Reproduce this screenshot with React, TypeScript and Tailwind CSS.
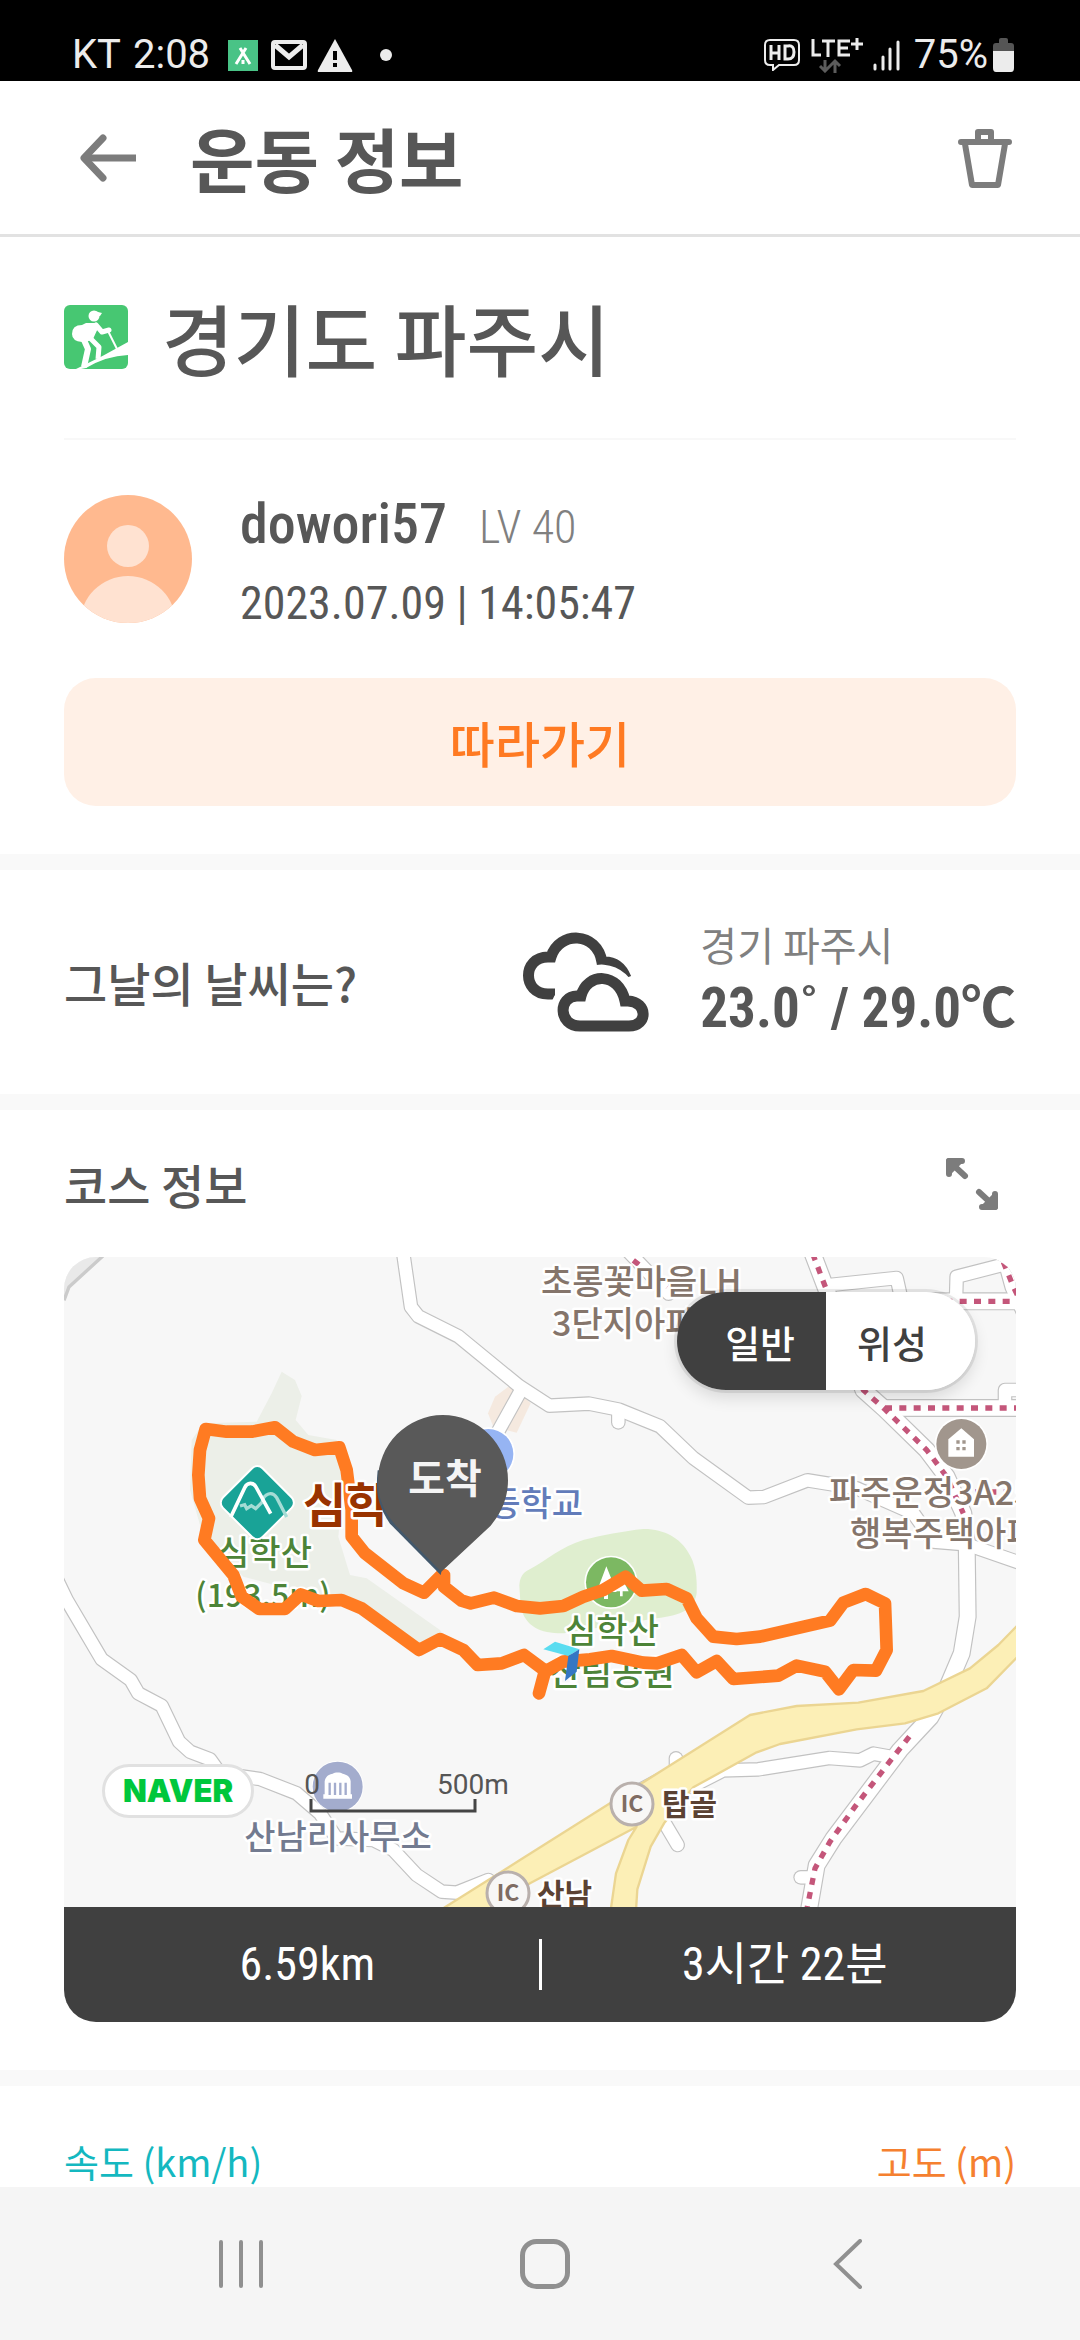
import type { ReactNode } from "react";

const LATIN = "font-['Roboto_Condensed','Noto_Sans_CJK_KR',sans-serif]";

// Map geometry is drawn on a 2856x1950 grid, three units to one label unit.
const ROADS = [
  "M1015 -30 1041 150 1063 178 1183 238 1365 387 1456 446 1575 440 1665 458 1788 508 1888 603 2053 722 2100 720 2230 670 2378 694 2548 769 2608 854 2708 862 2870 918",
  "M1663 462V496",
  "M1368 405 1296 535",
  "M-30 950 8 1029 113 1207 200 1269 223 1309 293 1346 345 1454 378 1484 438 1507 468 1549 588 1566 698 1609 768 1669 818 1744 928 1749 988 1779 1058 1854 1133 1904 1178 1907 1273 1869",
  "M2478 1499 2428 1490 2388 1510 2296 1503 2083 1537 1978 1540 1880 1590",
  "M2210 1861H2250",
  "M1836 1504V1560",
  "M1790 1678 1841 1764",
  "M1718 1605 1820 1550",
  "M1680 -30 1814 110",
  "M2298 84 2498 63 2513 130",
  "M2676 130 2678 59 2830 20",
  "M2823 453V399H2890",
];

const WIDE_ROADS = [
  "M2708 850 2711 1079 2693 1189 2650 1290 2600 1380 2558 1425 2508 1479 2308 1745 2258 1825 2233 1970",
  "M2242 -21 2290 105 2398 399 2463 457 2588 579 2648 659 2698 769 2708 862",
  "M2290 133H2880",
  "M2463 453H2880",
  "M2818 -20 2848 89 2880 160",
];

const BORDERS = [
  "M2536 1439 2473 1519 2373 1649 2298 1754 2253 1834 2228 1960",
  "M2246 -10 2290 105 2398 399 2463 457 2588 579 2648 659 2698 769",
  "M2300 133H2870",
  "M2463 453H2870",
  "M2818 15 2848 89 2870 134",
  "M1708 10 1810 90",
  "M2690 705H2870",
];

const ROUTE =
  "M1140 954V989L1193 1031 1220 1039 1290 1022 1358 1047 1428 1054 1498 1047 1558 1019 1618 999 1685 959 1733 1001 1808 996 1868 1024 1898 1084 1948 1139 2018 1146 2088 1139 2298 1091 2338 1037 2405 1011 2463 1039 2466 1119 2468 1179 2436 1241 2368 1239 2325 1297 2283 1244 2198 1226 2143 1256 2008 1266 1958 1212 1898 1246 1853 1194 1780 1219 1738 1217 1643 1197 1578 1207 1498 1214 1443 1244 1425 1309 1443 1241 1380 1194 1313 1219 1241 1224 1198 1179 1128 1146 1065 1179 893 1054 833 1029 763 1032 710 1012 663 1056H586L533 1019 508 954 421 849 435 784 408 724 403 654 408 579 425 516 488 524H563L633 511 688 554 753 579 826 571 848 639 863 759V839L903 889 1018 979 1080 1007 1133 954";

type LabelProps = {
  x: number;
  y: number;
  fill: string;
  size?: number;
  weight?: number;
  anchor?: "start" | "middle" | "end";
  children: ReactNode;
};

function Label({ x, y, fill, size = 34, weight = 500, anchor = "start", children }: LabelProps) {
  return (
    <text
      x={x}
      y={y}
      fill={fill}
      fontSize={size}
      fontWeight={weight}
      textAnchor={anchor}
      stroke="#fff"
      strokeWidth={5}
      strokeLinejoin="round"
      paintOrder="stroke"
    >
      {children}
    </text>
  );
}

function IcMarker({ x, y }: { x: number; y: number }) {
  return (
    <g>
      <circle cx={x} cy={y} r={21} fill="#f8f7f6" stroke="#b9b0ac" strokeWidth={3} />
      <text x={x} y={y + 8} fill="#7f6c62" fontSize={23} fontWeight={700} textAnchor="middle">
        IC
      </text>
    </g>
  );
}

function CourseMap() {
  return (
    <svg
      viewBox="0 0 952 650"
      className="block h-auto w-full font-['Noto_Sans_CJK_KR',sans-serif]"
      role="img"
      aria-label="코스 지도"
    >
      <rect width={952} height={650} fill="#f7f7f7" />
      <g transform="scale(0.333333)" fill="none">
        <path d="M0 0H120L15 94 0 130Z" fill="#e9e9e9" />
        <path d="M122 -8 15 90 0 130" stroke="#cbcbcb" strokeWidth={10} />
        <path
          d="M653 344 693 369 713 417 695 489 733 534 818 549 838 679 823 839 858 954 908 964 1128 1119 1160 1160 1065 1179 893 1054 538 959 418 839 378 699 383 549 418 499 578 494 623 409Z"
          fill="#ecefe8"
        />
        <path
          d="M1366 985C1368 955 1380 945 1400 935C1450 908 1490 870 1560 848C1610 836 1680 822 1738 816C1800 815 1850 845 1872 885C1895 920 1900 960 1898 1009C1890 1060 1850 1075 1778 1084L1500 1129C1430 1130 1385 1110 1370 1050Z"
          fill="#dfeecf"
        />
        <path d="M1333 389 1293 419 1272 469 1288 509 1358 527 1400 439 1370 410Z" fill="#f5e9df" />

        <g stroke="#c2c2c2" strokeLinecap="round" strokeLinejoin="round">
          {ROADS.map((d) => (
            <path key={d} d={d} strokeWidth={44} />
          ))}
          {WIDE_ROADS.map((d) => (
            <path key={d} d={d} strokeWidth={54} />
          ))}
        </g>
        <g stroke="#fff" strokeLinecap="round" strokeLinejoin="round">
          {ROADS.map((d) => (
            <path key={d} d={d} strokeWidth={37} />
          ))}
          {WIDE_ROADS.map((d) => (
            <path key={d} d={d} strokeWidth={47} />
          ))}
        </g>
        <g stroke="#c4567a" strokeWidth={16} strokeDasharray="21 22">
          {BORDERS.map((d) => (
            <path key={d} d={d} />
          ))}
        </g>

        <path
          d="M1128 1960 1368 1809 2058 1374 2198 1347 2383 1337 2578 1302 2718 1234 2803 1164 2870 1095V1190L2768 1294 2623 1369 2523 1399 2378 1417 2148 1461 2078 1486 1888 1591 1800 1699 1760 1769 1720 1897 1716 1960H1640L1656 1849 1693 1749 1718 1709 1398 1879 1272 1960Z"
          fill="#fcefb6"
          stroke="#ebd592"
          strokeWidth={7}
          strokeLinejoin="round"
        />

        <circle cx={2692} cy={561} r={80} fill="#fff" />
        <circle cx={2692} cy={561} r={75} fill="#a1968d" />
        <path d="M2653 547 2692 514 2730 547V599H2653Z" fill="#fff" />
        <path d="M2677 550h10v10h-10zM2695 550h10v10h-10zM2677 570h10v10h-10zM2695 570h10v10h-10z" fill="#a1968d" />

        <circle cx={1641} cy={976} r={80} fill="#fff" />
        <circle cx={1641} cy={976} r={75} fill="#7cb862" />
        <path d="M1627 928 1658 1005H1632V1026H1620V1005H1598Z" fill="#fff" />
        <path d="M1672 960 1694 1003H1676V1018H1668V1003H1652Z" fill="#fff" />

        <circle cx={1273} cy={591} r={80} fill="#fff" />
        <circle cx={1273} cy={591} r={75} fill="#96b4f3" />

        <circle cx={821} cy={1589} r={78} fill="#fff" />
        <circle cx={821} cy={1589} r={75} fill="#a3accd" />
        <path
          d="M782 1573C785 1555 798 1552 806 1550C812 1545 830 1545 836 1550C846 1552 858 1557 860 1573V1612H864V1625H778V1612H782Z"
          fill="#fff"
        />
        <path d="M797 1577V1614M813 1577V1614M829 1577V1614M845 1577V1614" stroke="#a3accd" strokeWidth={7} />
      </g>

      <Label x={477} y={37} fill="#85756b">초롱꽃마을LH</Label>
      <Label x={488} y={79} fill="#85756b">3단지아파트</Label>
      <Label x={765} y={248} fill="#85756b">파주운정3A25</Label>
      <Label x={786} y={289} fill="#85756b">행복주택아파트</Label>
      <Label x={519} y={259} fill="#627cba" anchor="end">초등학교</Label>
      <Label x={201} y={308} fill="#4d8438" anchor="middle">심학산</Label>
      <Label x={199} y={350} fill="#4d8438" size={32} anchor="middle">(193.5m)</Label>
      <Label x={548} y={386} fill="#4d8438" anchor="middle">심학산</Label>
      <Label x={548} y={428} fill="#4d8438" anchor="middle">산림공원</Label>
      <Label x={274} y={592} fill="#737b90" anchor="middle">산남리사무소</Label>
      <IcMarker x={568} y={547} />
      <IcMarker x={444} y={636} />
      <Label x={598} y={558} fill="#5b4233" size={30} weight={700}>탑골</Label>
      <Label x={473} y={648} fill="#5b4233" size={30} weight={700}>산남</Label>

      <g transform="scale(0.333333)" fill="none">
        <path d={ROUTE} stroke="#ff7b22" strokeWidth={38} strokeLinecap="round" strokeLinejoin="round" />
        <rect
          x={496}
          y={653}
          width={168}
          height={168}
          rx={22}
          transform="rotate(45 580 737)"
          fill="#19a397"
          stroke="#fff"
          strokeWidth={6}
        />
        <path
          d="M528 747 542 743 548 755 562 746 575 755 594 736M594 736C600 708 625 702 638 722L668 780"
          stroke="#a5dcd5"
          strokeWidth={10}
        />
        <path d="M500 781 542 692C550 675 568 675 576 690L620 770" stroke="#fff" strokeWidth={11} />
        <path d="M1438 1177 1473 1154 1546 1177 1513 1197Z" fill="#5adcf0" />
        <path d="M1546 1177 1513 1197 1503 1272 1538 1244Z" fill="#3577c4" />
      </g>
      <Label x={239} y={265} fill="#993300" size={47} weight={700}>심학산</Label>

      <g transform="scale(0.333333)">
        <path d="M1130 954 978 800C938 740 935 700 941 640L1200 640Z" fill="#42586c" />
        <path
          d="M1136 474A196 196 0 0 1 1332 670C1332 735 1302 780 1280 806L1132 944 996 806C965 770 942 735 942 670A196 196 0 0 1 1136 474Z"
          fill="#595959"
        />
      </g>
      <text x={381} y={236} fill="#f4f4f4" fontSize={40} fontWeight={700} textAnchor="middle">
        도착
      </text>

      <g className="font-['Roboto',sans-serif]" fill="#555" fontSize={28} textAnchor="middle">
        <text x={248} y={537}>0</text>
        <text x={409} y={537}>500m</text>
      </g>
      <path d="M247 542V554H411V542" fill="none" stroke="#454545" strokeWidth={3} />
    </svg>
  );
}

function StatusBar() {
  return (
    <div className="flex h-[81px] items-end justify-between bg-black pr-[66px] pb-[7px] pl-[72px] font-['Roboto',sans-serif] text-[40px] leading-[38px] text-[#ececec]">
      <div className="flex items-center">
        <span>KT</span>
        <span className="ml-3">2:08</span>
        <svg className="ml-[18px] h-[31px] w-[30px]" viewBox="0 0 30 31" fill="none">
          <rect width={30} height={31} fill="#49c386" />
          <path d="M12 8 22 24M18 8 8 24M15 20V24" stroke="#fff" strokeWidth={3} />
        </svg>
        <svg className="ml-[13px] h-[30px] w-9" viewBox="0 0 36 30" fill="none" stroke="#ececec">
          <rect x={2} y={2} width={32} height={26} rx={2} strokeWidth={4} />
          <path d="M4 5 18 17 32 5" strokeWidth={5} />
        </svg>
        <svg className="ml-[10px] h-[33px] w-9" viewBox="0 0 36 33">
          <path d="M18 0 35 31Q36 33 34 33H2Q0 33 1 31Z" fill="#ececec" />
          <path d="M16 12h4v9h-4zM16 24h4v4h-4z" fill="#000" />
        </svg>
        <span className="ml-[27px] size-3 rounded-full bg-[#ececec]" />
      </div>
      <div className="flex items-center">
        <svg className="h-8 w-[36px]" viewBox="0 0 36 32" fill="none" stroke="#ececec">
          <path d="M6 1H30Q35 1 35 6V21Q35 26 30 26H15L9 31V26H6Q1 26 1 21V6Q1 1 6 1Z" strokeWidth={2} />
          <path d="M7 6V21M15 6V21M7 14H15M21 7V20H24Q30 20 30 13T24 7Z" strokeWidth={3} />
        </svg>
        <svg className="ml-[10px] h-9 w-[54px]" viewBox="0 0 54 36" fill="none" stroke="#ececec">
          <path d="M3 2V18H11M12 4H25M18 4V20M40 4H29V18H40M29 11H38M41 7H53M47 1V13" strokeWidth={3} />
          <path d="M15 23V34M10 29 15 34 20 29M25 36V24M20 29 25 24 30 29" stroke="#5c5c5c" strokeWidth={3} />
        </svg>
        <svg className="ml-2 h-[31px] w-7" viewBox="0 0 28 31" fill="none" stroke="#ececec" strokeLinecap="round" strokeWidth={3}>
          <path d="M3 25V29M11 17V29M18 9V29M26 2V29" />
        </svg>
        <span className="ml-[14px]">75%</span>
        <svg className="ml-[5px] h-[34px] w-[21px]" viewBox="0 0 21 34">
          <path d="M6 2Q6 0 8 0H13Q15 0 15 2V5H18Q21 5 21 8V14H0V8Q0 5 3 5H6Z" fill="#555" />
          <path d="M0 13H21V30Q21 34 18 34H3Q0 34 0 30Z" fill="#ececec" />
        </svg>
      </div>
    </div>
  );
}

function HikingIcon() {
  return (
    <svg className="size-16 shrink-0" viewBox="0 0 64 64" fill="none" stroke="#fff">
      <rect width={64} height={64} rx={6} fill="#47c772" stroke="none" />
      <circle cx={30} cy={11} r={5.5} fill="#fff" stroke="none" />
      <path d="M30 6 38 8 36 11H30Z" fill="#fff" stroke="none" />
      <path d="M22 18H32L35 21 29 34 20 38 18 37Q8 36 8 29Q8 20 18 20Z" fill="#fff" stroke="none" />
      <path d="M32 20 38 27 45 25" strokeWidth={5} strokeLinecap="round" strokeLinejoin="round" />
      <path d="M26 33 35 42 34 54" strokeWidth={5} strokeLinejoin="round" />
      <path d="M20 35 24 44 20 62" strokeWidth={6} strokeLinejoin="round" />
      <path d="M44 26 53 44" strokeWidth={2} />
      <path d="M12 64Q38 52 64 37V50Q42 51 22 63L17 64Z" fill="#fff" stroke="none" />
    </svg>
  );
}

function Divider() {
  return <div className="h-4 bg-[#f9f9f9]" />;
}

export default function App() {
  return (
    <div className="flex min-h-screen flex-col bg-white font-['Noto_Sans_CJK_KR',sans-serif] text-[#575757]">
      <StatusBar />

      <header className="flex h-[156px] items-center border-b-[3px] border-[#e2e2e2] pr-[67px] pl-20">
        <button type="button" aria-label="뒤로">
          <svg className="block h-12 w-14" viewBox="0 0 56 48" fill="none" stroke="#7c7c7c" strokeWidth={7}>
            <path d="M3 24H56" />
            <path d="M23 4 4 24 23 44" strokeLinecap="round" strokeLinejoin="round" />
          </svg>
        </button>
        <h1 className="ml-[54px] text-[70px] leading-[96px] font-bold">운동 정보</h1>
        <button type="button" aria-label="삭제" className="ml-auto">
          <svg className="block h-[62px] w-[56px]" viewBox="0 0 56 62" fill="none" stroke="#7c7c7c" strokeWidth={6} strokeLinejoin="round" strokeLinecap="round">
            <path d="M4 15H52M21 13V5H34V13M8 17 15 58H41L48 17" />
          </svg>
        </button>
      </header>

      <main>
        <section className="px-16 pb-12">
          <div className="flex items-center gap-[34px] border-b-2 border-[#f8f8f8] pt-[52px] pb-[53px]">
            <HikingIcon />
            <h2 className="text-[78px] leading-[96px] font-medium">경기도 파주시</h2>
          </div>
          <div className="flex h-[238px] items-center gap-12">
            <svg className="size-32 rounded-full" viewBox="0 0 128 128">
              <rect width={128} height={128} fill="#ffb98f" />
              <circle cx={64} cy={51} r={21} fill="#ffe2d1" />
              <circle cx={64} cy={129} r={48} fill="#ffe2d1" />
            </svg>
            <div className={`flex flex-col gap-6 pt-2 leading-[52px] ${LATIN}`}>
              <div className="flex items-baseline gap-8">
                <span className="text-[56px] font-medium">dowori57</span>
                <span className="text-[46px] font-light text-[#808080]">LV 40</span>
              </div>
              <div className="text-[46px]">2023.07.09 | 14:05:47</div>
            </div>
          </div>
          <button
            type="button"
            className="h-32 w-full rounded-[32px] bg-[#fff0e6] text-[49px] font-medium text-[#ff7a22]"
          >
            따라가기
          </button>
        </section>

        <Divider />

        <section className="flex h-56 items-center px-16">
          <h3 className="text-[47px] leading-[64px] font-medium">그날의 날씨는?</h3>
          <svg className="ml-auto h-[100px] w-[126px]" viewBox="0 0 126 100" fill="none" stroke="#404040" strokeWidth={11} strokeLinejoin="miter">
            <path d="M32 62H25C-1 62 -1 25 25 25H28C36 -1 74 -1 79 30C92 29 99 36 103 46" />
            <path
              d="M58 94C35 94 35 64 56 63H58C64 39 96 39 103 68H106C125 70 125 94 106 94Z"
              stroke="#fff"
              strokeWidth={26}
            />
            <path d="M57 94C35 94 35 64 54 64H58C64 40 96 40 102 69H105C125 70 125 94 106 94Z" fill="#fff" />
          </svg>
          <div className="ml-[51px]">
            <div className="text-[40px] leading-[52px] text-[#808080]">경기 파주시</div>
            <div className={`text-[55px] leading-[76px] font-bold ${LATIN}`}>23.0˚ / 29.0℃</div>
          </div>
        </section>

        <Divider />

        <section className="px-16 pb-12">
          <div className="flex h-[147px] items-center justify-between pr-[18px]">
            <h3 className="text-[47px] leading-[64px] font-medium">코스 정보</h3>
            <button type="button" aria-label="지도 확대">
              <svg className="block size-[52px]" viewBox="0 0 52 52" fill="none" stroke="#7c7c7c" strokeWidth={6} strokeLinecap="round" strokeLinejoin="round">
                <path d="M3 16V3H16M5 5 19 18M49 36V49H36M47 47 33 34" />
                <path d="M3 14V3H14ZM49 38V49H38Z" fill="#7c7c7c" />
              </svg>
            </button>
          </div>
          <div className="relative overflow-hidden rounded-[32px]">
            <CourseMap />
            <div className="absolute top-[35px] right-[41px] flex h-[98px] overflow-hidden rounded-full text-[38px] font-medium shadow-[0_0_0_3px_rgba(0,0,0,0.08),0_8px_16px_rgba(0,0,0,0.12)]">
              <button type="button" aria-pressed="true" className="bg-[#404040] pr-[31px] pl-12 text-white">
                일반
              </button>
              <button type="button" aria-pressed="false" className="bg-white pr-12 pl-[31px] text-[#404040]">
                위성
              </button>
            </div>
            <a
              href="#naver"
              className="absolute top-[507px] left-[38px] flex h-[54px] items-center rounded-full border-[3px] border-[#e1e1e1] bg-white px-[18px] font-['Inter',sans-serif] text-[31px] font-black text-[#00c73c]"
            >
              NAVER
            </a>
            <div className={`flex h-[115px] items-center bg-[#404040] text-center text-[46px] text-white ${LATIN}`}>
              <div className="flex-1 pl-3">6.59km</div>
              <div className="h-[51px] w-[3px] bg-white" />
              <div className="flex-1 pl-3">3시간 22분</div>
            </div>
          </div>
        </section>

        <Divider />

        <section className="flex justify-between px-16 pt-12 text-[38px] leading-[53px]">
          <span className="text-[#14b8c0]">속도 (km/h)</span>
          <span className="text-[#f5802f]">고도 (m)</span>
        </section>
      </main>

      <nav className="mt-auto flex h-[153px] items-center justify-between bg-[#f5f5f5] pr-[212px] pl-[216px]">
        <button type="button" aria-label="최근 앱">
          <svg className="block h-[50px] w-[50px]" viewBox="0 0 50 50" stroke="#909090" strokeWidth={4} strokeLinecap="round">
            <path d="M5 3V47M25 3V47M45 3V47" />
          </svg>
        </button>
        <button type="button" aria-label="홈">
          <svg className="block h-[50px] w-[50px]" viewBox="0 0 50 50" fill="none" stroke="#909090" strokeWidth={5}>
            <rect x={2.5} y={2.5} width={45} height={45} rx={14} />
          </svg>
        </button>
        <button type="button" aria-label="이전">
          <svg className="block h-[50px] w-[44px]" viewBox="0 0 44 50" fill="none" stroke="#909090" strokeWidth={4} strokeLinecap="round">
            <path d="M36 2 12 25 36 48" />
          </svg>
        </button>
      </nav>
    </div>
  );
}
